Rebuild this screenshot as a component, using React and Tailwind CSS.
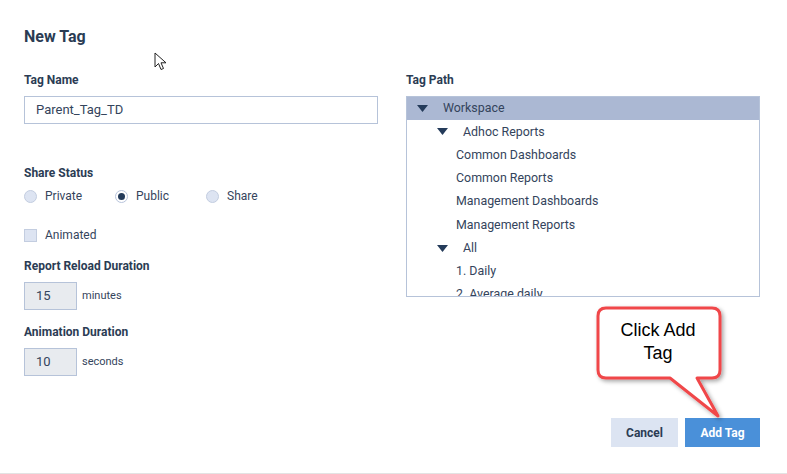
import React from 'react';

const Caret = () => (
  <svg width="11" height="7" viewBox="0 0 11 7" className="shrink-0">
    <path d="M0 0 L11 0 L5.5 7 Z" fill="#243b5a" />
  </svg>
);

const Radio = ({ label, checked }) => (
  <div className="flex items-center gap-2 w-[91px]">
    {checked ? (
      <span className="w-[13px] h-[13px] rounded-full border border-[#b8c4dc] bg-white flex items-center justify-center">
        <span className="w-[7px] h-[7px] rounded-full bg-[#243b5a]" />
      </span>
    ) : (
      <span className="w-[13px] h-[13px] rounded-full border border-[#c3cde0] bg-[#dde4f2]" />
    )}
    <span>{label}</span>
  </div>
);

const treeRows = [
  { label: 'Workspace', level: 0, caret: true, active: true },
  { label: 'Adhoc Reports', level: 1, caret: true },
  { label: 'Common Dashboards', level: 2 },
  { label: 'Common Reports', level: 2 },
  { label: 'Management Dashboards', level: 2 },
  { label: 'Management Reports', level: 2 },
  { label: 'All', level: 1, caret: true },
  { label: '1. Daily', level: 2 },
  { label: '2. Average daily', level: 2 },
];

const TreeRow = ({ row }) => {
  let pad = 'pl-[49px]';
  if (row.level === 0) pad = 'pl-[10px]';
  if (row.level === 1) pad = 'pl-[30px]';
  return (
    <div className={`h-[23.25px] shrink-0 flex items-center ${pad} ${row.active ? 'bg-[#abb8d3]' : ''}`}>
      {row.caret && <Caret />}
      <span className={row.caret ? 'ml-[15px]' : ''}>{row.label}</span>
    </div>
  );
};

export default function App() {
  return (
    <div
      className="relative w-[787px] h-[474px] bg-white flex flex-col border-b border-[#e3e3e3] text-[#34445c] overflow-hidden"
      style={{ fontFamily: 'Roboto, "Liberation Sans", sans-serif' }}
    >
      <div className="px-6 pt-[27px]">
        <h1 className="text-[16px] leading-[20px] font-bold text-[#2b3c54]">New Tag</h1>

        <div className="flex gap-[28px] mt-[25px]">
          {/* left column */}
          <div className="w-[354px] flex flex-col">
            <label className="text-[12px] leading-[16px] font-bold text-[#2b3c54]">Tag Name</label>
            <div className="mt-2 h-[28px] border border-[#b6c3d9] flex items-center px-[11px] text-[13px]">
              Parent_Tag_TD
            </div>

            <label className="mt-[41px] text-[12px] leading-[16px] font-bold text-[#2b3c54]">Share Status</label>
            <div className="mt-[7px] h-4 flex items-center text-[12px]">
              <Radio label="Private" />
              <Radio label="Public" checked />
              <Radio label="Share" />
            </div>

            <div className="mt-[23px] h-4 flex items-center gap-2 text-[12px]">
              <span className="w-[13px] h-[13px] border border-[#c3cde0] bg-[#dde4f2]" />
              <span>Animated</span>
            </div>

            <label className="mt-[15px] text-[12px] leading-[16px] font-bold text-[#2b3c54]">Report Reload Duration</label>
            <div className="mt-2 flex items-center gap-[5px]">
              <div className="w-[53px] h-[28px] bg-[#e8ebef] border border-[#b6c3d9] flex items-center pl-[11px] text-[13px]">15</div>
              <span className="text-[11px]">minutes</span>
            </div>

            <label className="mt-[14px] text-[12px] leading-[16px] font-bold text-[#2b3c54]">Animation Duration</label>
            <div className="mt-2 flex items-center gap-[5px]">
              <div className="w-[53px] h-[28px] bg-[#e8ebef] border border-[#b6c3d9] flex items-center pl-[11px] text-[13px]">10</div>
              <span className="text-[11px]">seconds</span>
            </div>
          </div>

          {/* right column */}
          <div className="w-[354px] flex flex-col">
            <label className="text-[12px] leading-[16px] font-bold text-[#2b3c54]">Tag Path</label>
            <div className="mt-2 h-[201px] border border-[#b6c3d9] overflow-hidden flex flex-col text-[12.4px]">
              {treeRows.map((row) => (
                <TreeRow key={row.label} row={row} />
              ))}
            </div>
          </div>
        </div>
      </div>

      <div className="mt-auto flex justify-end gap-[7px] pr-[27px] pb-[26px]">
        <button className="w-[67px] h-[29px] bg-[#dce4f2] text-[12px] font-bold text-[#2b3c54]">Cancel</button>
        <button className="w-[75px] h-[29px] bg-[#4a90d9] text-[12px] font-bold text-white">Add Tag</button>
      </div>

      {/* mouse cursor */}
      <svg className="absolute left-[154px] top-[52px]" width="13" height="20" viewBox="0 0 13 20">
        <path d="M1 1 L1 15 L4.5 11.5 L7 17.5 L9.5 16.5 L7 10.8 L12 10.8 Z" fill="white" stroke="#222" strokeWidth="1" strokeLinejoin="round" />
      </svg>

      {/* callout */}
      <svg className="absolute left-[590px] top-[300px]" width="140" height="125" viewBox="0 0 140 125">
        <defs>
          <filter id="sh" x="-20%" y="-20%" width="140%" height="140%">
            <feDropShadow dx="2" dy="2" stdDeviation="2" floodColor="#000" floodOpacity="0.35" />
          </filter>
        </defs>
        <path
          d="M16 8 H122 Q130 8 130 16 V70 Q130 78 122 78 H107 L128 116 L80 78 H16 Q8 78 8 70 V16 Q8 8 16 8 Z"
          fill="white"
          stroke="#f0474a"
          strokeWidth="3"
          strokeLinejoin="round"
          filter="url(#sh)"
        />
      </svg>
      <div
        className="absolute left-[598px] top-[319px] w-[120px] text-center text-[18px] leading-[23px] text-black"
        style={{ fontFamily: '"Liberation Sans", Arial, sans-serif' }}
      >
        Click Add
        <br />
        Tag
      </div>
    </div>
  );
}
